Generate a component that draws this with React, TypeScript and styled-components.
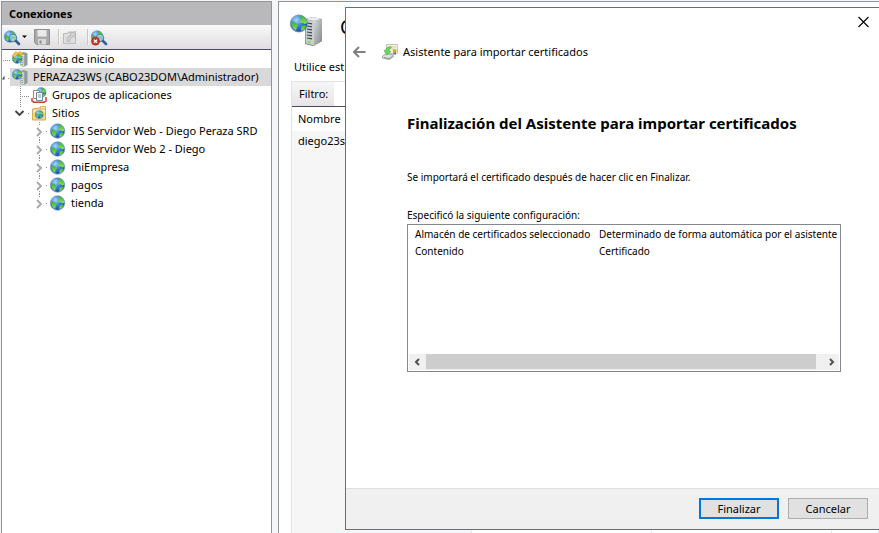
import React from "react";
import styled, { createGlobalStyle } from "styled-components";

const UI = '"Noto Sans", "Open Sans", sans-serif';

const GlobalStyle = createGlobalStyle`
  *, *::before, *::after { box-sizing: border-box; }
  body { margin: 0; background: #f5f6f7; color: #000; font: 11px/18px ${UI}; overflow: hidden; }
  button, input { font: inherit; color: inherit; }
`;

const Page = styled.div`
  position: relative;
  display: grid;
  grid-template-columns: 271px minmax(0, 1fr);
  column-gap: 6px;
  height: 100vh;
  padding: 1px 0 0 1px;
  overflow: hidden;
`;

const Pane = styled.section`
  display: flex;
  flex-direction: column;
  min-width: 0;
  background: #fff;
  border: 1px solid #919394;
  border-bottom: 0;
`;

const ContentPane = styled(Pane)`
  border-right: 0;
`;

const PaneTitle = styled.h2`
  margin: 0;
  padding: 3px 7px 2px;
  background: #b9b8ba;
  font-size: 11px;
  line-height: 18px;
  font-weight: 700;
`;

const Toolbar = styled.div`
  display: flex;
  align-items: center;
  height: 25px;
  padding: 0 2px;
  background: linear-gradient(#f9f9f9, #dfdde0);
  border-bottom: 1px solid #484868;
`;

const ToolButton = styled.button<{ $w?: number }>`
  display: flex;
  align-items: center;
  justify-content: flex-start;
  width: ${(p) => p.$w ?? 22}px;
  height: 20px;
  padding: 0;
  border: 0;
  background: none;
`;

const ToolSeparator = styled.span`
  width: 2px;
  height: 16px;
  background: #c9c9bd;
  border-right: 1px solid #f4f4f4;
  margin: 0 2px;
`;

const Tree = styled.ul`
  margin: 0;
  padding: 0;
  list-style: none;
`;

const TreeRow = styled.li`
  display: flex;
  height: 18px;
`;

const Gutter = styled.svg`
  flex: none;
  display: block;
`;

const TreeItem = styled.span<{ $selected?: boolean }>`
  display: flex;
  flex: 1;
  align-items: center;
  gap: 5px;
  padding-left: 2px;
  white-space: nowrap;
  background: ${(p) => (p.$selected ? "#d9d9d9" : "transparent")};
`;

const FeatureHeader = styled.header`
  display: flex;
  align-items: flex-start;
  gap: 16px;
  height: 56px;
  padding: 11px 11px 0;
`;

const FeatureTitle = styled.h1`
  margin: 0;
  font-size: 19px;
  line-height: 28px;
  font-weight: 400;
  white-space: nowrap;
`;

const Description = styled.p`
  margin: 0;
  padding: 0 15px 5px;
  white-space: nowrap;
`;

const ListView = styled.div`
  display: flex;
  flex: 1;
  flex-direction: column;
  margin-left: 12px;
  border: 1px solid #e3e3e3;
  border-width: 1px 0 0 1px;
`;

const FilterBar = styled.div`
  display: flex;
  height: 25px;
  border-bottom: 1px solid #484868;
`;

const FilterLabel = styled.label`
  width: 42px;
  padding: 3px 0 0 7px;
  background: linear-gradient(#f6f6f6, #e6e4e7);
`;

const FilterInput = styled.input`
  flex: 1;
  border: 0;
  outline: 0;
`;

const ListTable = styled.table`
  flex: 1;
  display: grid;
  grid-template-rows: 24px 1fr;
  th, td { padding: 0 6px; font-weight: 400; text-align: left; }
  thead, tbody { display: grid; }
  tr { display: grid; grid-template-columns: 180px 180px 180px 1fr; }
  th { line-height: 24px; }
  td { line-height: 20px; border-right: 1px solid #e8e8ea; }
  td:first-child { background: #f6f6f6; }
`;

const Dialog = styled.div`
  position: absolute;
  top: 7px;
  bottom: 3px;
  left: 345px;
  right: 0;
  display: flex;
  flex-direction: column;
  background: #fff;
  border: 1px solid #1883d7;
  border-right: 0;
`;

const DialogCaption = styled.div`
  display: flex;
  justify-content: flex-end;
  height: 36px;
  padding: 4px 5px 0;
`;

const IconButton = styled.button`
  display: grid;
  place-items: center;
  width: 20px;
  height: 20px;
  padding: 0;
  border: 0;
  background: none;
`;

const DialogHeader = styled.div`
  display: flex;
  align-items: center;
  height: 16px;
  padding-left: 4px;
  gap: 12px;
`;

const DialogName = styled.span`
  display: flex;
  align-items: center;
  gap: 5px;
`;

const DialogBody = styled.div`
  display: flex;
  flex: 1;
  flex-direction: column;
  padding: 53px 38px 0 61px;
  font-size: 10px;
`;

const Headline = styled.h2`
  margin: 0 0 35px;
  font-size: 15px;
  line-height: 20px;
  font-weight: 700;
  white-space: nowrap;
`;

const Paragraph = styled.p`
  margin: 0 0 20px;
  white-space: nowrap;
`;

const SummaryBox = styled.div`
  display: flex;
  flex-direction: column;
  justify-content: space-between;
  height: 148px;
  border: 1px solid #828790;
  padding: 1px;
  overflow: hidden;
`;

const SummaryTable = styled.table`
  border-collapse: collapse;
  table-layout: fixed;
  width: 100%;
  td { padding: 0 0 0 6px; line-height: 17px; white-space: nowrap; }
  td:first-child { width: 184px; }
`;

const ScrollBar = styled.div`
  display: flex;
  height: 16px;
  background: #f0f0f0;
`;

const ScrollArrow = styled.button`
  display: grid;
  place-items: center;
  width: 17px;
  padding: 0;
  border: 0;
  background: none;
`;

const ScrollTrack = styled.div`
  flex: 1;
  padding-right: 6px;
`;

const ScrollThumb = styled.div`
  height: 15px;
  background: #cdcdcd;
`;

const DialogFooter = styled.footer`
  display: flex;
  justify-content: flex-end;
  gap: 9px;
  padding: 9px 11px 10px;
  background: #f0f0f0;
  border-top: 1px solid #dfdfdf;
`;

const PushButton = styled.button<{ $primary?: boolean }>`
  width: 80px;
  height: 21px;
  padding: 0;
  line-height: 16px;
  background: #e1e1e1;
  border: ${(p) => (p.$primary ? "2px solid #0078d7" : "1px solid #adadad")};
`;

const IconSheet = styled.svg`
  position: absolute;
  width: 0;
  height: 0;
`;

const IconDefs = () => (
  <IconSheet aria-hidden>
    <defs>
      <radialGradient id="sea" cx=".35" cy=".3" r=".75">
        <stop offset="0" stopColor="#a9d8fb" />
        <stop offset=".45" stopColor="#3f8ae6" />
        <stop offset="1" stopColor="#173fae" />
      </radialGradient>
      <linearGradient id="land" x1="0" y1="0" x2="0" y2="1">
        <stop offset="0" stopColor="#3fae35" />
        <stop offset="1" stopColor="#8be84d" />
      </linearGradient>
      <linearGradient id="metal" x1="0" y1="0" x2="1" y2="1">
        <stop offset="0" stopColor="#d5d9da" />
        <stop offset="1" stopColor="#7e8589" />
      </linearGradient>
    </defs>
    <symbol id="globe" viewBox="0 0 16 16">
      <circle cx="7.500" cy="8" r="7.200" fill="url(#sea)" stroke="#6d93ad" strokeWidth=".7" />
      <path d="M7.800 1.200l3.500.8 2.300 2.600.8 3-1.900.9-1.800-1.200-1.700.3-1.100-2 1.500-1.400z" fill="url(#land)" />
      <path d="M.8 6.800l2.600-.3 1.900 1.400 1.700 1.500-1.300 1.700-.6 3-2.600-2.300z" fill="url(#land)" />
      <path d="M9.300 10.400l2.700-1.200 1.800.8-1.800 3-2.500 1.300z" fill="url(#land)" />
    </symbol>
  </IconSheet>
);

const Globe = () => (
  <svg width="16" height="16"><use href="#globe" width="16" height="16" /></svg>
);

const SmallServer = ({ home }: { home?: boolean }) => (
  <svg width="16" height="16" viewBox="0 0 16 16">
    <path d="M8.500 2.500l3-1.500 4 1.200V14L12 15.700l-3.500-1z" fill="#8f999e" />
    <path d="M8.500 2.500l3.700 1v12.200l-3.700-1z" fill="#e6eaec" stroke="#98a2a7" strokeWidth=".5" />
    <path d="M9 5.500l2.500.5M9 7.500l2.500.5M9 9.500l2.500.5M9 11.500l2.500.5" stroke="#7f8b91" strokeWidth=".9" />
    <path d="M9.300 13h1.700v1.300H9.300z" fill="#63c238" />
    <use href="#globe" x="0" y={home ? 2 : 0} width="11" height="11" />
    {home && <path d="M.3 5L3.500.8l2 1.200L8.500.6l2.300 3.200-2 .6L6.500 2.800 2.500 6z" fill="#fac53f" stroke="#d28a1c" strokeWidth=".6" />}
  </svg>
);

const LargeServer = () => (
  <svg width="34" height="34" viewBox="0 0 34 34">
    <path d="M15 6l8-2 9 2v22l-9 5-8-2z" fill="#5f676b" />
    <path d="M24 8l8-2v22l-8 5z" fill="url(#metal)" />
    <path d="M15.500 6.500L24 8v24.500l-8.500-2z" fill="#c9ced1" />
    <path d="M15 6l8-2 9 2-8 2z" fill="#e9edef" />
    <path d="M17 10l5 .8M17 13l5 .8M17 16l5 .8M17 19l5 .8M17 22l5 .8M17 25l5 .8" stroke="#3e474c" strokeWidth="1.200" />
    <path d="M17.500 28h3v2.300h-3z" fill="#83e04a" />
    <use href="#globe" x="0" y="1" width="19" height="19" />
  </svg>
);

const Magnifier = ({ stop }: { stop?: boolean }) => (
  <svg width="17" height="17" viewBox="0 0 17 17">
    <use href="#globe" x="0" y="1" width="13" height="13" />
    <circle cx="9" cy="9" r="3.700" fill="#bfe1f4" fillOpacity=".6" stroke="#54809e" strokeWidth="1.100" />
    <path d="M12 12l3 3" stroke="#2f6193" strokeWidth="2.600" strokeLinecap="round" />
    {stop && (
      <>
        <circle cx="4.500" cy="12.200" r="4" fill="#d5322b" stroke="#9c1f1f" strokeWidth=".6" />
        <path d="M2.900 10.600l3.200 3.200M6.100 10.600l-3.200 3.200" stroke="#fff" strokeWidth="1.300" />
      </>
    )}
  </svg>
);

const AppPools = () => (
  <svg width="16" height="16" viewBox="0 0 16 16">
    <use href="#globe" x="5" y="0" width="11" height="11" />
    <path d="M1 11v3l2 1.300h10l2-1.300v-4" fill="#fff" stroke="#cf3b34" strokeWidth="1.500" />
    <path d="M2.500 3.500h6v8h-6z" fill="#fff" stroke="#8394a0" />
    <path d="M5.500 5.500h6v8h-6z" fill="#f7fafc" stroke="#6f8593" />
    <path d="M7 8h3M7 10h3" stroke="#6f9dc5" />
  </svg>
);

const SitesFolder = () => (
  <svg width="16" height="16" viewBox="0 0 16 16">
    <path d="M1.500 4v11h13V1.500h-5L8.500 3z" fill="#f3d683" stroke="#d3ac55" />
    <path d="M10 1.500h4.500v2.300H9z" fill="#fbeebd" stroke="#d3ac55" strokeWidth=".7" />
    <path d="M2 5h12v2.500H2z" fill="#fbe9b0" />
    <use href="#globe" x="4" y="5" width="9" height="9" />
  </svg>
);

const Floppy = () => (
  <svg width="16" height="16" viewBox="0 0 16 16">
    <path d="M.5.5h15v15h-13l-2-2z" fill="#a9a9a9" stroke="#8f8f8f" />
    <path d="M3.500 1h9v6.500h-9z" fill="#e9e9e9" />
    <path d="M4 10h8v5.500H4z" fill="#dadada" />
    <path d="M5.500 11.500h2v3h-2z" fill="#8a8a8a" />
  </svg>
);

const FolderUp = () => (
  <svg width="16" height="16" viewBox="0 0 16 16">
    <path d="M1.500 4.500h4l1-1.500h4v1.500h3v10h-12z" fill="#dedede" stroke="#bababa" />
    <path d="M5 12.500Q4.500 8 9 6L7.800 4 13.500 2.500 13 8l-1.600-1Q7.500 8.500 7.500 12.500z" fill="#d2d2d2" stroke="#adadad" strokeWidth=".8" />
  </svg>
);

const CertificateWizard = () => (
  <svg width="16" height="16" viewBox="0 0 16 16">
    <path d="M4.500.5h11v9h-11z" fill="#f3efdf" stroke="#c9c5b3" />
    <path d="M9 3h5M10 5h2" stroke="#cfcfbf" />
    <path d="M11.500 8v3l1.200-.8 1.200.8V8z" fill="#4b6fb5" />
    <circle cx="12.700" cy="6.800" r="1.900" fill="#e6a11f" />
    <path d="M.5 12l4-2.500 6.500 1.500.5 1.500-4 3-7-1.500z" fill="#dfe2e3" stroke="#8b9295" strokeWidth=".8" />
    <path d="M2 13.500l5 1.200 3.500-2.500" fill="none" stroke="#7b8387" strokeWidth=".8" />
    <path d="M8.500 2.500Q4 3 3.800 6.500L2 6.300l2.800 5 4-3.700-1.900-.4Q7 4.500 9.500 4z" fill="#6fd65c" stroke="#43ac40" strokeWidth=".6" />
  </svg>
);

type Node = {
  label: string;
  level: number;
  icon: React.ReactNode;
  lines: string;
  chevron?: "open" | "closed" | "cut";
  selected?: boolean;
};

const sites = ["IIS Servidor Web - Diego Peraza SRD", "IIS Servidor Web 2 - Diego", "miEmpresa", "pagos", "tienda"];

const nodes: Node[] = [
  { label: "Página de inicio", level: 0, icon: <SmallServer home />, lines: "M1 10.500H8" },
  { label: "PERAZA23WS (CABO23DOM\\Administrador)", level: 0, icon: <SmallServer />, lines: "M6 10.500H8", chevron: "cut", selected: true },
  { label: "Grupos de aplicaciones", level: 1, icon: <AppPools />, lines: "M18.500 0V18M20 10.500H27" },
  { label: "Sitios", level: 1, icon: <SitesFolder />, lines: "M18.500 0V3M26 9.500H29", chevron: "open" },
  ...sites.map((label, i): Node => ({
    label,
    level: 2,
    icon: <Globe />,
    chevron: "closed",
    lines: `M37.500 0V4${i < sites.length - 1 ? "M37.500 15V18" : ""}M44 9.500H48`,
  })),
];

const chevrons = {
  cut: { d: "M0 11.500L2.500 7.500V11.500z", color: "#404040" },
  open: { d: "M13.500 7l4 4 4-4", color: "#404040" },
  closed: { d: "M35 6l4 4-4 4", color: "#a6a6a6" },
};

const TreeGutter = ({ node }: { node: Node }) => {
  const width = 8 + node.level * 19;
  const chevron = node.chevron && chevrons[node.chevron];
  return (
    <Gutter width={width} height="18" aria-hidden>
      <path d={node.lines} stroke="#8a8a8a" strokeDasharray="1 1" fill="none" />
      {chevron && (
        <path
          d={chevron.d}
          stroke={node.chevron === "cut" ? "none" : chevron.color}
          strokeWidth="1.800"
          fill={node.chevron === "cut" ? chevron.color : "none"}
        />
      )}
    </Gutter>
  );
};

export default function App() {
  return (
    <>
      <GlobalStyle />
      <IconDefs />
      <Page>
        <Pane>
          <PaneTitle>Conexiones</PaneTitle>
          <Toolbar>
            <ToolButton $w={30} aria-label="Conectar">
              <Magnifier />
              <svg width="9" height="6"><path d="M1 1.500h5L3.500 4z" fill="#000" /></svg>
            </ToolButton>
            <ToolButton aria-label="Guardar"><Floppy /></ToolButton>
            <ToolSeparator />
            <ToolButton $w={23} aria-label="Subir"><FolderUp /></ToolButton>
            <ToolSeparator />
            <ToolButton aria-label="Desconectar"><Magnifier stop /></ToolButton>
          </Toolbar>
          <Tree>
            {nodes.map((node) => (
              <TreeRow key={node.label}>
                <TreeGutter node={node} />
                <TreeItem $selected={node.selected}>
                  {node.icon}
                  {node.label}
                </TreeItem>
              </TreeRow>
            ))}
          </Tree>
        </Pane>
        <ContentPane>
          <FeatureHeader>
            <LargeServer />
            <FeatureTitle>C</FeatureTitle>
          </FeatureHeader>
          <Description>Utilice est</Description>
          <ListView>
            <FilterBar>
              <FilterLabel htmlFor="filter">Filtro:</FilterLabel>
              <FilterInput id="filter" />
            </FilterBar>
            <ListTable>
              <thead><tr><th>Nombre</th></tr></thead>
              <tbody><tr><td>diego23s</td><td /><td /><td /></tr></tbody>
            </ListTable>
          </ListView>
        </ContentPane>
        <Dialog role="dialog" aria-label="Asistente para importar certificados">
          <DialogCaption>
            <IconButton aria-label="Cerrar">
              <svg width="12" height="12"><path d="M.5 1l10 10M10.500 1l-10 10" stroke="#000" strokeWidth="1.100" /></svg>
            </IconButton>
          </DialogCaption>
          <DialogHeader>
            <IconButton aria-label="Atrás">
              <svg width="14" height="12"><path d="M6 1L1 6l5 5M1 6h11.500" fill="none" stroke="#808080" strokeWidth="2" /></svg>
            </IconButton>
            <DialogName><CertificateWizard />Asistente para importar certificados</DialogName>
          </DialogHeader>
          <DialogBody>
            <Headline>Finalización del Asistente para importar certificados</Headline>
            <Paragraph>Se importará el certificado después de hacer clic en Finalizar.</Paragraph>
            <span>Especificó la siguiente configuración:</span>
            <SummaryBox>
              <SummaryTable>
                <tbody>
                  <tr><td>Almacén de certificados seleccionado</td><td>Determinado de forma automática por el asistente</td></tr>
                  <tr><td>Contenido</td><td>Certificado</td></tr>
                </tbody>
              </SummaryTable>
              <ScrollBar>
                <ScrollArrow aria-label="Desplazar a la izquierda">
                  <svg width="8" height="8"><path d="M5 1L2 4l3 3" fill="none" stroke="#505050" strokeWidth="2" /></svg>
                </ScrollArrow>
                <ScrollTrack><ScrollThumb /></ScrollTrack>
                <ScrollArrow aria-label="Desplazar a la derecha">
                  <svg width="8" height="8"><path d="M3 1l3 3-3 3" fill="none" stroke="#505050" strokeWidth="2" /></svg>
                </ScrollArrow>
              </ScrollBar>
            </SummaryBox>
          </DialogBody>
          <DialogFooter>
            <PushButton $primary>Finalizar</PushButton>
            <PushButton>Cancelar</PushButton>
          </DialogFooter>
        </Dialog>
      </Page>
    </>
  );
}
